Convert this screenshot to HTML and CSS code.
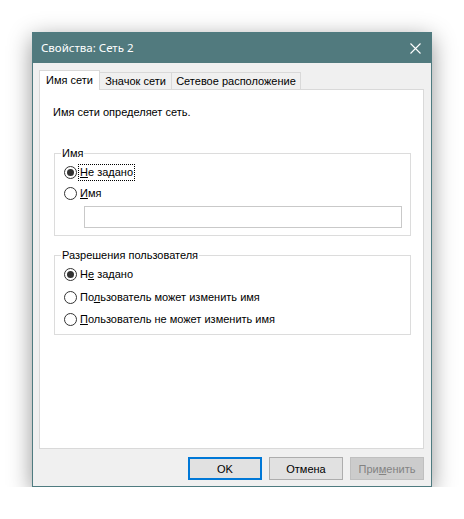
FILE: index.html
```html
<!DOCTYPE html>
<html lang="ru">
<head>
<meta charset="utf-8">
<title>Свойства: Сеть 2</title>
<link rel="stylesheet" href="styles.css">
</head>
<body>
<div class="window">
  <div class="titlebar">
    <span class="title">Свойства: Сеть 2</span>
    <svg class="close" width="11" height="11" viewBox="0 0 11 11"><path d="M0.5 0.5 L10.5 10.5 M10.5 0.5 L0.5 10.5" stroke="#fff" stroke-width="1.1" fill="none"/></svg>
  </div>
  <div class="body">
    <div class="tabs">
      <div class="tab active t1">Имя сети</div>
      <div class="tab t2">Значок сети</div>
      <div class="tab t3">Сетевое расположение</div>
    </div>
    <div class="panel">
      <p class="desc">Имя сети определяет сеть.</p>
      <div class="group g1">
        <span class="legend">Имя</span>
        <div class="radio"><span class="dot on"></span><span class="label focus"><u>Н</u>е задано</span></div>
        <div class="radio"><span class="dot"></span><span class="label"><u>И</u>мя</span></div>
        <div class="input"></div>
      </div>
      <div class="group g2">
        <span class="legend">Разрешения пользователя</span>
        <div class="radio"><span class="dot on"></span><span class="label">Н<u>е</u> задано</span></div>
        <div class="radio"><span class="dot"></span><span class="label">По<u>л</u>ьзователь может изменить имя</span></div>
        <div class="radio"><span class="dot"></span><span class="label"><u>П</u>ользователь не может изменить имя</span></div>
      </div>
    </div>
    <div class="buttons">
      <div class="btn default">OK</div>
      <div class="btn">Отмена</div>
      <div class="btn disabled">При<u>м</u>енить</div>
    </div>
  </div>
</div>
</body>
</html>
```
FILE: styles.css
```css
html, body {
  margin: 0;
  padding: 0;
  background: #ffffff;
}
body {
  font-family: "Liberation Sans", Arial, sans-serif;
  font-size: 11px;
  color: #000;
  overflow: hidden;
}
.window {
  margin: 32px 0 0 32px;
  width: 400px;
  height: 455px;
  box-sizing: border-box;
  border: 1px solid #4f7b80;
  background: #f0f0f0;
  box-shadow: 0 6px 22px rgba(0, 0, 0, 0.42);
}
.titlebar {
  height: 30px;
  background: #517a7e;
  display: flex;
  align-items: center;
  justify-content: space-between;
  padding: 0 10px 0 8px;
  color: #fff;
  font-family: "Noto Sans", "Open Sans", sans-serif;
  font-size: 11.5px;
}
.title {
  line-height: 16px;
}
.close {
  display: block;
}
.body {
  padding: 7px 7px 0 6px;
}
.tabs {
  display: flex;
  align-items: flex-end;
  height: 19px;
}
.tab {
  box-sizing: border-box;
  height: 17px;
  border: 1px solid #d9d9d9;
  border-bottom: none;
  background: #f0f0f0;
  line-height: 16px;
  text-align: center;
  margin-left: -1px;
  white-space: nowrap;
}
.tab.t1 { width: 61px; margin-left: 0; }
.tab.t2 { width: 73px; }
.tab.t3 { width: 130px; }
.tab.active {
  height: 20px;
  background: #fff;
  margin-bottom: -1px;
  position: relative;
  z-index: 1;
  line-height: 18px;
}
.panel {
  box-sizing: border-box;
  height: 360px;
  background: #fff;
  border: 1px solid #d9d9d9;
  padding: 15px 12px 0 14px;
}
.desc {
  margin: 0 0 0 -1px;
  line-height: 14px;
}
.group {
  position: relative;
  border: 1px solid #dcdcdc;
  display: flex;
  flex-direction: column;
}
.g1 {
  margin-top: 34px;
  padding: 10px 8px 7px 9px;
  gap: 5px;
}
.g2 {
  margin-top: 19px;
  padding: 10px 8px 7px 9px;
  gap: 6px;
}
.g2 .radio:nth-of-type(2) {
  margin-top: 1px;
}
.legend {
  position: absolute;
  top: -8px;
  left: 6px;
  padding: 0 1px;
  background: #fff;
  line-height: 14px;
}
.radio {
  display: flex;
  align-items: center;
  height: 16px;
}
.dot {
  box-sizing: border-box;
  width: 13px;
  height: 13px;
  border: 1px solid #333;
  border-radius: 50%;
  background: #fff;
  display: flex;
  align-items: center;
  justify-content: center;
  margin-right: 2px;
  flex: none;
}
.dot.on::after {
  content: "";
  width: 7px;
  height: 7px;
  border-radius: 50%;
  background: #333;
}
.label {
  padding: 0 1px;
  line-height: 15px;
  white-space: nowrap;
}
.label.focus {
  outline: 1px dotted #000;
  outline-offset: 0;
}
.input {
  box-sizing: border-box;
  height: 22px;
  margin-left: 20px;
  border: 1px solid #c9c9c9;
  background: #fff;
}
.buttons {
  display: flex;
  justify-content: flex-end;
  gap: 7px;
  margin-top: 8px;
}
.btn {
  box-sizing: border-box;
  width: 74px;
  height: 23px;
  border: 1px solid #adadad;
  background: #e1e1e1;
  display: flex;
  align-items: center;
  justify-content: center;
  white-space: nowrap;
}
.btn.default {
  border: 2px solid #0078d7;
}
.btn.disabled {
  background: #cccccc;
  border-color: #bfbfbf;
  color: #838383;
}
```
